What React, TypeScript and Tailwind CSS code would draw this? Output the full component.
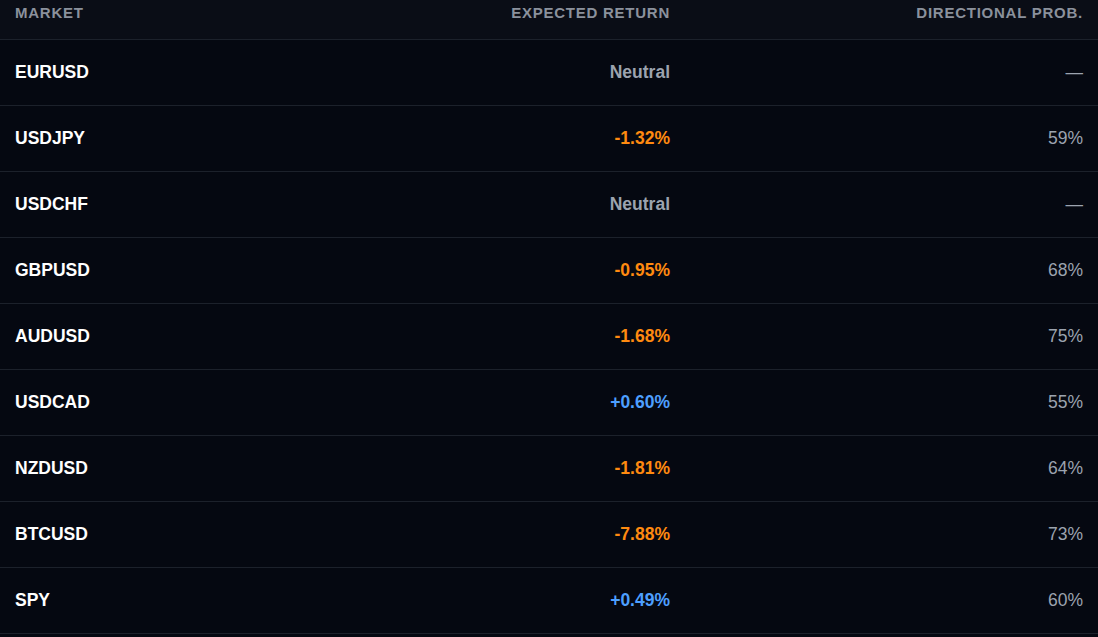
const rows: { market: string; ret: string; tone: "neutral" | "down" | "up"; prob: string }[] = [
  { market: "EURUSD", ret: "Neutral", tone: "neutral", prob: "—" },
  { market: "USDJPY", ret: "-1.32%", tone: "down", prob: "59%" },
  { market: "USDCHF", ret: "Neutral", tone: "neutral", prob: "—" },
  { market: "GBPUSD", ret: "-0.95%", tone: "down", prob: "68%" },
  { market: "AUDUSD", ret: "-1.68%", tone: "down", prob: "75%" },
  { market: "USDCAD", ret: "+0.60%", tone: "up", prob: "55%" },
  { market: "NZDUSD", ret: "-1.81%", tone: "down", prob: "64%" },
  { market: "BTCUSD", ret: "-7.88%", tone: "down", prob: "73%" },
  { market: "SPY", ret: "+0.49%", tone: "up", prob: "60%" },
];

const toneClass = {
  neutral: "text-[#9ca3af]",
  down: "text-[#ff8a10]",
  up: "text-[#4d9fff]",
};

export default function App() {
  return (
    <div className="min-h-screen bg-[#050811] font-['Liberation_Sans',Arial,sans-serif]">
      <div className="grid h-[40px] grid-cols-[400px_285px_1fr] items-start border-b border-[#1c212b] bg-[#0a0d16] pt-[4px] text-[15px] leading-[18px] font-bold uppercase tracking-[0.05em] text-[#8b919c]">
        <div className="pl-[15px]">Market</div>
        <div className="pr-[15px] text-right">Expected Return</div>
        <div className="pr-[15px] text-right">Directional Prob.</div>
      </div>
      {rows.map((row) => (
        <div
          key={row.market}
          className="grid h-[66px] grid-cols-[400px_285px_1fr] items-center border-b border-[#1c212b] text-[17.5px]"
        >
          <div className="pl-[15px] font-bold text-white">{row.market}</div>
          <div className={`pr-[15px] text-right font-bold ${toneClass[row.tone]}`}>{row.ret}</div>
          <div className="pr-[15px] text-right text-[#9ca3af]">{row.prob}</div>
        </div>
      ))}
    </div>
  );
}
